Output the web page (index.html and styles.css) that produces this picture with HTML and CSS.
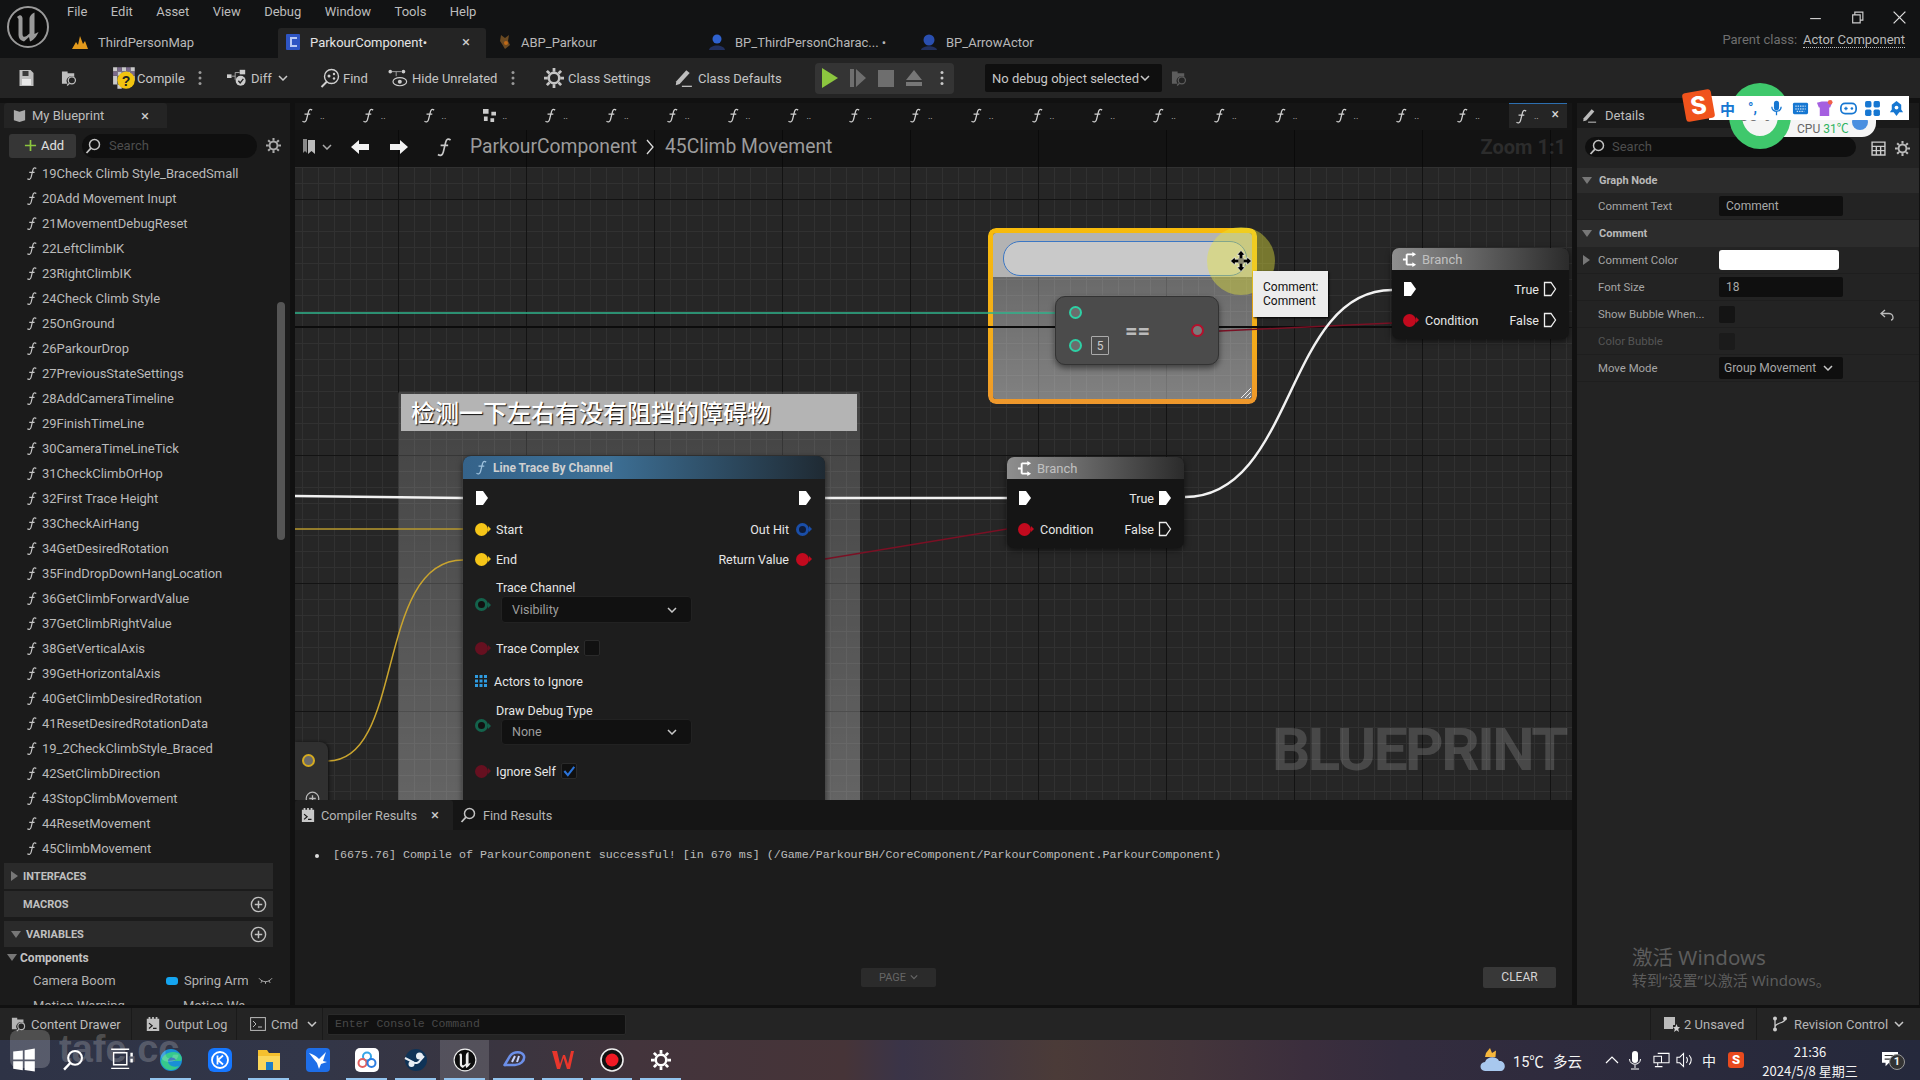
FILE: index.html
```html
<!DOCTYPE html>
<html lang="en">
<head>
<meta charset="utf-8">
<title>ParkourComponent</title>
<link rel="stylesheet" href="styles.css">
</head>
<body>
<svg class="defs" width="0" height="0">
  <defs>
    <symbol id="f" viewBox="0 0 14 16"><path d="M12 2.2C10 .8 8.6 1.6 8 4L6 12.2C5.4 14.8 3.6 15.6 1.6 14.2M3.8 6.6H10" fill="none" stroke="currentColor" stroke-width="1.4"/></symbol>
    <symbol id="exec" viewBox="0 0 14 16"><path d="M1 1H8L13 8L8 15H1Z" fill="#fff"/></symbol>
    <symbol id="exec-o" viewBox="0 0 14 16"><path d="M1.5 1.5H8L12.5 8L8 14.5H1.5Z" fill="none" stroke="#eee" stroke-width="1.3"/></symbol>
    <symbol id="branch" viewBox="0 0 16 16"><path d="M1 8H5M5 2.5H12M5 13.5H12M5 2.5V13.5" fill="none" stroke="#fff" stroke-width="2"/><path d="M11 0L15 2.5L11 5ZM11 11L15 13.5L11 16Z" fill="#fff"/></symbol>
    <symbol id="search" viewBox="0 0 16 16"><circle cx="9.5" cy="6.5" r="5" fill="none" stroke="currentColor" stroke-width="1.5"/><path d="M6 10.2L1.5 15" stroke="currentColor" stroke-width="1.8"/></symbol>
    <symbol id="gear" viewBox="0 0 16 16"><circle cx="8" cy="8" r="4.2" fill="none" stroke="currentColor" stroke-width="2"/><path d="M8 0V3M8 13V16M0 8H3M13 8H16M2.3 2.3L4.4 4.4M11.6 11.6L13.7 13.7M2.3 13.7L4.4 11.6M11.6 4.4L13.7 2.3" stroke="currentColor" stroke-width="2.2"/></symbol>
    <symbol id="kebab" viewBox="0 0 4 16"><circle cx="2" cy="2.5" r="1.5" fill="currentColor"/><circle cx="2" cy="8" r="1.5" fill="currentColor"/><circle cx="2" cy="13.5" r="1.5" fill="currentColor"/></symbol>
    <symbol id="chev" viewBox="0 0 10 6"><path d="M1 1L5 5L9 1" fill="none" stroke="currentColor" stroke-width="1.5"/></symbol>
    <symbol id="plus-c" viewBox="0 0 16 16"><circle cx="8" cy="8" r="6.7" fill="none" stroke="currentColor" stroke-width="1.3"/><path d="M8 4.5V11.5M4.5 8H11.5" stroke="currentColor" stroke-width="1.4"/></symbol>
    <symbol id="folder-s" viewBox="0 0 18 18"><path d="M1 2H7V4H14V8A5 5 0 0 0 7 15H1Z" fill="currentColor"/><circle cx="11.5" cy="11.5" r="3.8" fill="none" stroke="currentColor" stroke-width="1.3"/><path d="M9 14.5L6.5 17" stroke="currentColor" stroke-width="1.3"/></symbol>
    <symbol id="pen" viewBox="0 0 18 18"><path d="M3 12L12 2L15 4.5L6 14.5L2.5 15.5Z" fill="currentColor"/><path d="M8 16.5H17" stroke="currentColor" stroke-width="1.2"/></symbol>
    <symbol id="log" viewBox="0 0 16 18"><path d="M1 3H3V1H5V3H7V1H9V3H11V1H13V3H15V17H1Z" fill="currentColor"/><path d="M3.5 8L7 11L3.5 14M8 14H12" fill="none" stroke="#1c1c1c" stroke-width="1.4"/></symbol>
    <symbol id="ue" viewBox="0 0 44 44"><circle cx="22" cy="22" r="20" fill="#0c0c0c" stroke="currentColor" stroke-width="2"/><path d="M11 12C14 9 16 10 16.500 13V29C16.500 32 18.500 32.500 20.500 31L23.500 28.500V14C23.500 11 26 8.500 28.500 7.500V29L32.500 27C31 31 27 36 24 36.500L23 32L18 36.500C14.500 35.500 12.500 33.500 12.500 30V14Z" fill="currentColor"/></symbol>
  </defs>
</svg>

<div class="app">
  <header class="titlebar">
    <svg class="logo"><use href="#ue"/></svg>
    <div class="title-main">
      <div class="menu-row">
        <nav class="menu"><span>File</span><span>Edit</span><span>Asset</span><span>View</span><span>Debug</span><span>Window</span><span>Tools</span><span>Help</span></nav>
        <div class="winctl">
          <svg class="ctl" viewBox="0 0 14 14"><path d="M2 8H12" stroke="#ccc" stroke-width="1.1"/></svg>
          <svg class="ctl" viewBox="0 0 14 14"><path d="M2.500 4.500H9.500V12H2.500ZM4.500 4.500V2H12V9.500H9.500" fill="none" stroke="#ccc" stroke-width="1.100"/></svg>
          <svg class="ctl" viewBox="0 0 14 14"><path d="M1.500 1.500L12.500 12.500M12.500 1.500L1.500 12.500" stroke="#ddd" stroke-width="1.200"/></svg>
        </div>
      </div>
      <div class="tab-row">
        <div class="doc-tab t-map"><svg class="doc-ic" viewBox="0 0 18 18"><path d="M1 16L5 9L7 12L9 3L12 11L14 8L17 16Z" fill="#e39a1c"/></svg><span>ThirdPersonMap</span></div>
        <div class="doc-tab t-active"><svg class="doc-ic" viewBox="0 0 18 18"><rect x="2" y="1" width="14" height="16" rx="1" fill="#2e55c4"/><path d="M13 5H7V13H13" fill="none" stroke="#b8c9f4" stroke-width="2"/></svg><span class="t-text">ParkourComponent•</span><span class="t-x">×</span></div>
        <div class="doc-tab t-abp"><svg class="doc-ic" viewBox="0 0 18 18"><path d="M5 2L9 5L13 2L12 8L14 12L9 16L6 11L4 8Z" fill="#6b4a22"/><circle cx="10" cy="10" r="2" fill="#c06a18"/></svg><span>ABP_Parkour</span></div>
        <div class="doc-tab t-third"><svg class="doc-ic" viewBox="0 0 18 18"><circle cx="9" cy="6" r="4.500" fill="#2f62cf"/><path d="M1 17C2 11 16 11 17 17Z" fill="#22305f"/></svg><span>BP_ThirdPersonCharac... •</span></div>
        <div class="doc-tab t-arrow"><svg class="doc-ic" viewBox="0 0 18 18"><circle cx="9" cy="7" r="5.500" fill="#2a4fb0"/><path d="M1 17C2 12 16 12 17 17Z" fill="#22305f"/></svg><span>BP_ArrowActor</span></div>
        <div class="parent"><span class="parent-l">Parent class:</span><span class="parent-v">Actor Component</span></div>
      </div>
    </div>
  </header>

  <div class="toolbar">
    <svg class="tool-ic i-save" viewBox="0 0 16 18"><path d="M1 1H12L15 4V17H1Z" fill="#bdbdbd"/><rect x="4" y="2" width="6" height="5" fill="#3a3a3a"/><rect x="3.500" y="10" width="9" height="6" fill="#e8e8e8"/></svg>
    <svg class="tool-ic i-browse"><use href="#folder-s"/></svg>
    <svg class="i-compile" viewBox="0 0 22 24"><path d="M0 2H4V6H0ZM8 2H12V6H8ZM16 2H20V6H16ZM4 6H8V10H4ZM12 6H16V10H12ZM0 10H4V14H0ZM16 10H20V14H16ZM4 18H8V22H4ZM0 14H4V18H0Z" fill="#c9c9c9"/><path d="M4 2H8V6H4ZM12 2H16V6H12ZM0 6H4V10H0ZM8 6H12V10H8ZM16 6H20V10H16Z" fill="#7a6a8a"/><circle cx="12" cy="14" r="8" fill="#f2c40f"/><text x="12" y="19" class="q">?</text></svg>
    <span class="tool-t t-compile">Compile</span>
    <svg class="kebab k1"><use href="#kebab"/></svg>
    <svg class="i-diff" viewBox="0 0 22 20"><rect x="0" y="6" width="5" height="4" fill="#ccc"/><rect x="14" y="1" width="6" height="5" fill="#ccc"/><path d="M5 8H9M9 4V12M9 4H14" stroke="#aaa" fill="none"/><circle cx="15" cy="13" r="5.500" fill="#ccc"/><path d="M12.500 13L14.500 15.500L18 11" stroke="#222" stroke-width="1.500" fill="none"/></svg>
    <span class="tool-t t-diff">Diff</span>
    <svg class="chev c-diff"><use href="#chev"/></svg>
    <svg class="i-find" viewBox="0 0 20 20"><circle cx="11.500" cy="8.500" r="7" fill="none" stroke="#d0d0d0" stroke-width="1.400"/><path d="M7 13.500L1.500 19" stroke="#d0d0d0" stroke-width="2"/><circle cx="9" cy="8" r="1.500" fill="#d0d0d0"/><circle cx="14" cy="6" r="1.200" fill="#d0d0d0"/><circle cx="14" cy="10.500" r="1.200" fill="#d0d0d0"/></svg>
    <span class="tool-t t-find">Find</span>
    <svg class="i-hide" viewBox="0 0 22 20"><circle cx="2.500" cy="3" r="2" fill="#ccc"/><circle cx="17" cy="3" r="2" fill="#ccc"/><path d="M4 3H15M9 3V8" stroke="#aaa"/><ellipse cx="13" cy="14" rx="7.500" ry="4.500" fill="none" stroke="#ccc" stroke-width="1.300"/><circle cx="13" cy="14" r="2.200" fill="#ccc"/></svg>
    <span class="tool-t t-hide">Hide Unrelated</span>
    <svg class="kebab k2"><use href="#kebab"/></svg>
    <svg class="i-gear"><use href="#gear"/></svg>
    <span class="tool-t t-settings">Class Settings</span>
    <svg class="i-pen"><use href="#pen"/></svg>
    <span class="tool-t t-defaults">Class Defaults</span>
    <div class="playbar">
      <svg class="pb pb-play" viewBox="0 0 18 22"><path d="M1 1L17 11L1 21Z" fill="#8cc63f"/></svg>
      <svg class="pb pb-step" viewBox="0 0 18 22"><path d="M1 2H5V20H1Z M7 2L17 11L7 20Z" fill="#6e6e6e"/></svg>
      <svg class="pb pb-stop" viewBox="0 0 18 22"><rect x="1" y="3" width="16" height="17" fill="#6e6e6e"/></svg>
      <svg class="pb pb-eject" viewBox="0 0 18 22"><path d="M9 3L17 13H1ZM1 15H17V19H1Z" fill="#777"/></svg>
      <svg class="kebab k3"><use href="#kebab"/></svg>
    </div>
    <div class="debugsel"><span>No debug object selected</span><svg class="chev"><use href="#chev"/></svg></div>
    <svg class="tool-ic i-dbg"><use href="#folder-s"/></svg>
  </div>

  <main class="workspace">
    <aside class="left">
      <div class="dock-tab mybp"><svg class="book" viewBox="0 0 16 16"><path d="M2 2L8 4L14 2V13L8 15L2 13Z" fill="#aaa"/></svg><span>My Blueprint</span><span class="dock-x">×</span></div>
      <div class="left-search">
        <div class="add-btn"><svg class="plus" viewBox="0 0 14 14"><path d="M7 1V13M1 7H13" stroke="#8cc63f" stroke-width="1.800"/></svg><span>Add</span></div>
        <div class="search-pill sp-left"><svg class="s-ic"><use href="#search"/></svg><span>Search</span></div>
        <svg class="gear-s"><use href="#gear"/></svg>
      </div>
      <ul class="fn-list">
        <li><svg><use href="#f"/></svg>19Check Climb Style_BracedSmall</li>
        <li><svg><use href="#f"/></svg>20Add Movement Inupt</li>
        <li><svg><use href="#f"/></svg>21MovementDebugReset</li>
        <li><svg><use href="#f"/></svg>22LeftClimbIK</li>
        <li><svg><use href="#f"/></svg>23RightClimbIK</li>
        <li><svg><use href="#f"/></svg>24Check Climb Style</li>
        <li><svg><use href="#f"/></svg>25OnGround</li>
        <li><svg><use href="#f"/></svg>26ParkourDrop</li>
        <li><svg><use href="#f"/></svg>27PreviousStateSettings</li>
        <li><svg><use href="#f"/></svg>28AddCameraTimeline</li>
        <li><svg><use href="#f"/></svg>29FinishTimeLine</li>
        <li><svg><use href="#f"/></svg>30CameraTimeLineTick</li>
        <li><svg><use href="#f"/></svg>31CheckClimbOrHop</li>
        <li><svg><use href="#f"/></svg>32First Trace Height</li>
        <li><svg><use href="#f"/></svg>33CheckAirHang</li>
        <li><svg><use href="#f"/></svg>34GetDesiredRotation</li>
        <li><svg><use href="#f"/></svg>35FindDropDownHangLocation</li>
        <li><svg><use href="#f"/></svg>36GetClimbForwardValue</li>
        <li><svg><use href="#f"/></svg>37GetClimbRightValue</li>
        <li><svg><use href="#f"/></svg>38GetVerticalAxis</li>
        <li><svg><use href="#f"/></svg>39GetHorizontalAxis</li>
        <li><svg><use href="#f"/></svg>40GetClimbDesiredRotation</li>
        <li><svg><use href="#f"/></svg>41ResetDesiredRotationData</li>
        <li><svg><use href="#f"/></svg>19_2CheckClimbStyle_Braced</li>
        <li><svg><use href="#f"/></svg>42SetClimbDirection</li>
        <li><svg><use href="#f"/></svg>43StopClimbMovement</li>
        <li><svg><use href="#f"/></svg>44ResetMovement</li>
        <li><svg><use href="#f"/></svg>45ClimbMovement</li>
      </ul>
      <div class="sec"><i class="tri-r"></i><span>INTERFACES</span></div>
      <div class="sec sec-indent"><span>MACROS</span><svg class="sec-add"><use href="#plus-c"/></svg></div>
      <div class="sec sec-vars"><i class="tri-d"></i><span>VARIABLES</span><svg class="sec-add"><use href="#plus-c"/></svg></div>
      <div class="cat"><i class="tri-d"></i><span>Components</span></div>
      <div class="var"><span class="var-n">Camera Boom</span><i class="var-dot"></i><span class="var-t">Spring Arm</span><svg class="eye" viewBox="0 0 16 8"><path d="M1 1C5 6 11 6 15 1M3 6L4.500 3.800M8 7V4.800M13 6L11.500 3.800" stroke="#b5b5b5" fill="none"/></svg></div>
      <div class="var"><span class="var-n">Motion Warping</span><i class="var-dot2"></i><span class="var-t">Motion Wa</span></div>
      <div class="scrollthumb"></div>
    </aside>

    <section class="center">
      <div class="fn-tabs">
        <div class="fn-tab"><svg><use href="#f"/></svg><span>..</span></div>
        <div class="fn-tab"><svg><use href="#f"/></svg><span>..</span></div>
        <div class="fn-tab"><svg><use href="#f"/></svg><span>..</span></div>
        <div class="fn-tab"><svg viewBox="0 0 14 14"><path d="M0 0H6V5H0ZM9 3H14V7H9ZM1 8H5V13H1ZM8 10H12V14H8Z" fill="#ccc"/></svg><span>..</span></div>
        <div class="fn-tab"><svg><use href="#f"/></svg><span>..</span></div>
        <div class="fn-tab"><svg><use href="#f"/></svg><span>..</span></div>
        <div class="fn-tab"><svg><use href="#f"/></svg><span>..</span></div>
        <div class="fn-tab"><svg><use href="#f"/></svg><span>..</span></div>
        <div class="fn-tab"><svg><use href="#f"/></svg><span>..</span></div>
        <div class="fn-tab"><svg><use href="#f"/></svg><span>..</span></div>
        <div class="fn-tab"><svg><use href="#f"/></svg><span>..</span></div>
        <div class="fn-tab"><svg><use href="#f"/></svg><span>..</span></div>
        <div class="fn-tab"><svg><use href="#f"/></svg><span>..</span></div>
        <div class="fn-tab"><svg><use href="#f"/></svg><span>..</span></div>
        <div class="fn-tab"><svg><use href="#f"/></svg><span>..</span></div>
        <div class="fn-tab"><svg><use href="#f"/></svg><span>..</span></div>
        <div class="fn-tab"><svg><use href="#f"/></svg><span>..</span></div>
        <div class="fn-tab"><svg><use href="#f"/></svg><span>..</span></div>
        <div class="fn-tab"><svg><use href="#f"/></svg><span>..</span></div>
        <div class="fn-tab"><svg><use href="#f"/></svg><span>..</span></div>
        <div class="fn-tab fn-active"><svg><use href="#f"/></svg><span>..</span><b>×</b></div>
      </div>
      <div class="crumb">
        <svg class="bm" viewBox="0 0 14 18"><path d="M1 1H5V15L3 13L1 15Z" fill="#888"/><path d="M6 2H13V16L9.500 13L6 16Z" fill="#bbb"/></svg>
        <svg class="chev c-bm"><use href="#chev"/></svg>
        <svg class="nav n-back" viewBox="0 0 20 16"><path d="M9 1L1 8L9 15V11H19V5H9Z" fill="#f2f2f2"/></svg>
        <svg class="nav n-fwd" viewBox="0 0 20 16"><path d="M11 1L19 8L11 15V11H1V5H11Z" fill="#f2f2f2"/></svg>
        <svg class="crumb-f"><use href="#f"/></svg>
        <span class="crumb-a">ParkourComponent</span>
        <svg class="crumb-sep" viewBox="0 0 8 16"><path d="M1 1L7 8L1 15" fill="none" stroke="#ddd" stroke-width="1.300"/></svg>
        <span class="crumb-b">45Climb Movement</span>
        <span class="zoom">Zoom 1:1</span>
      </div>

      <div class="canvas">
        <div class="comment-big">
          <div class="comment-big-h">检测一下左右有没有阻挡的障碍物</div>
        </div>
        <div class="comment-sel">
          <div class="comment-sel-h"><div class="comment-input"></div></div>
          <svg class="grip" viewBox="0 0 12 12"><path d="M1 11L11 1M5 11L11 5M9 11L11 9" stroke="#eee"/></svg>
        </div>

        <svg class="wires" viewBox="0 0 1277 633">
          <path d="M0 160H1097" stroke="#0c0c0c" stroke-width="2" fill="none"/>
          <path d="M0 146H760" stroke="#2fb58c" stroke-width="1.500" fill="none"/>
          <path d="M904 165L1097 156" stroke="#7a1024" stroke-width="1.500" fill="none"/>
          <path d="M530 392L712 362" stroke="#7a1024" stroke-width="1.500" fill="none"/>
          <path d="M0 362H168" stroke="#b89a2e" stroke-width="1.500" fill="none"/>
          <path d="M33 594C110 594 80 393 168 393" stroke="#c9a42e" stroke-width="1.500" fill="none"/>
          <path d="M0 329L168 331" stroke="#f2f2f2" stroke-width="2.500" fill="none"/>
          <path d="M530 331H712" stroke="#f2f2f2" stroke-width="2.500" fill="none"/>
          <path d="M890 330C1000 330 990 123 1097 123" stroke="#f2f2f2" stroke-width="2.500" fill="none"/>
        </svg>

        <div class="eq-node">
          <div class="eq-pins">
            <i class="pin ring-g"></i>
            <div class="eq-row"><i class="pin ring-g"></i><span class="eq-5">5</span></div>
          </div>
          <span class="eq-sign">==</span>
          <i class="pin ring-r"></i>
        </div>

        <div class="node branch b-low">
          <div class="node-h"><svg><use href="#branch"/></svg><span>Branch</span></div>
          <div class="b-row"><svg class="execp"><use href="#exec"/></svg><em></em><span>True</span><svg class="execp"><use href="#exec"/></svg></div>
          <div class="b-row"><i class="pin red"></i><span class="b-cond">Condition</span><em></em><span>False</span><svg class="execp"><use href="#exec-o"/></svg></div>
        </div>
        <div class="node branch b-high">
          <div class="node-h"><svg><use href="#branch"/></svg><span>Branch</span></div>
          <div class="b-row"><svg class="execp"><use href="#exec"/></svg><em></em><span>True</span><svg class="execp"><use href="#exec-o"/></svg></div>
          <div class="b-row"><i class="pin red"></i><span class="b-cond">Condition</span><em></em><span>False</span><svg class="execp"><use href="#exec-o"/></svg></div>
        </div>

        <div class="node trace">
          <div class="trace-h"><svg><use href="#f"/></svg><span>Line Trace By Channel</span></div>
          <div class="t-row r-exec"><svg class="execp"><use href="#exec"/></svg><em></em><svg class="execp exec-r"><use href="#exec"/></svg></div>
          <div class="t-row r-start"><i class="pin yellow"></i><span>Start</span><em></em><span class="t-out">Out Hit</span><i class="pin blue"></i></div>
          <div class="t-row"><i class="pin yellow"></i><span>End</span><em></em><span class="t-out">Return Value</span><i class="pin red"></i></div>
          <div class="t-param">
            <i class="pin teal"></i>
            <div class="t-param-b"><span>Trace Channel</span><div class="combo"><span>Visibility</span><svg class="chev"><use href="#chev"/></svg></div></div>
          </div>
          <div class="t-row r-complex"><i class="pin dred"></i><span>Trace Complex</span><i class="check"></i></div>
          <div class="t-row r-actors"><svg class="arr" viewBox="0 0 12 12"><path d="M0 0H3V3H0ZM4.500 0H7.500V3H4.500ZM9 0H12V3H9ZM0 4.500H3V7.500H0ZM4.500 4.500H7.500V7.500H4.500ZM9 4.500H12V7.500H9ZM0 9H3V12H0ZM4.500 9H7.500V12H4.500ZM9 9H12V12H9Z" fill="#2f9be0"/></svg><span>Actors to Ignore</span></div>
          <div class="t-param p-debug">
            <i class="pin teal"></i>
            <div class="t-param-b"><span>Draw Debug Type</span><div class="combo"><span>None</span><svg class="chev"><use href="#chev"/></svg></div></div>
          </div>
          <div class="t-row r-self"><i class="pin dred"></i><span>Ignore Self</span><i class="check on"><svg viewBox="0 0 12 12"><path d="M2 6L5 9.500L10.500 2.500" fill="none" stroke="#2b73d8" stroke-width="1.800"/></svg></i></div>
          <svg class="chev more"><use href="#chev"/></svg>
        </div>

        <div class="mini-node"><i class="pin ring-y"></i></div>
        <svg class="mini-plus"><use href="#plus-c"/></svg>

        <div class="bp-mark">BLUEPRINT</div>
        <div class="cursor-glow"></div>
        <svg class="cursor" viewBox="0 0 24 24"><path d="M12 .5L16.500 5.500H14V10H18.500V7.500L23.500 12L18.500 16.500V14H14V18.500H16.500L12 23.500L7.500 18.500H10V14H5.500V16.500L.5 12L5.500 7.500V10H10V5.500H7.500Z" fill="#000" stroke="#fff" stroke-width=".7"/><path d="M9 9H15V15H9Z" fill="#8a8a70"/></svg>
        <div class="tooltip">Comment:<br>Comment</div>
      </div>

      <div class="bottom">
        <div class="bottom-tabs">
          <div class="btab b-active"><svg class="b-ic"><use href="#log"/></svg><span>Compiler Results</span><span class="b-x">×</span></div>
          <div class="btab"><svg class="b-s"><use href="#search"/></svg><span>Find Results</span></div>
        </div>
        <ul class="logs"><li>[6675.76] Compile of ParkourComponent successful! [in 670 ms] (/Game/ParkourBH/CoreComponent/ParkourComponent.ParkourComponent)</li></ul>
        <div class="bottom-foot"><div class="page-btn"><span>PAGE</span><svg class="chev"><use href="#chev"/></svg></div><div class="clear-btn">CLEAR</div></div>
      </div>
    </section>

    <aside class="details">
      <div class="dock-tab det"><svg class="det-pen"><use href="#pen"/></svg><span>Details</span></div>
      <div class="det-search"><div class="search-pill sp-det"><svg class="s-ic"><use href="#search"/></svg><span>Search</span></div>
        <svg class="tbl" viewBox="0 0 14 14"><path d="M1 1H13V13H1ZM1 5H13M1 9H13M5 5V13M9 5V13" fill="none" stroke="#ccc" stroke-width="1.300"/></svg>
        <svg class="gear-d"><use href="#gear"/></svg></div>
      <div class="d-head"><i class="tri-d"></i><span>Graph Node</span></div>
      <div class="d-row"><span class="d-label">Comment Text</span><div class="d-val">Comment</div></div>
      <div class="d-head d-head2"><i class="tri-d"></i><span>Comment</span></div>
      <div class="d-row"><i class="tri-r d-tri"></i><span class="d-label">Comment Color</span><div class="d-color"></div></div>
      <div class="d-row"><span class="d-label">Font Size</span><div class="d-val">18</div></div>
      <div class="d-row"><span class="d-label">Show Bubble When...</span><i class="d-check"></i><svg class="undo" viewBox="0 0 14 12"><path d="M5 1L1 4.500L5 8M1 4.500H9C12 4.500 13 7 13 8.500C13 10 12 11 11 11" fill="none" stroke="#bbb" stroke-width="1.300"/></svg></div>
      <div class="d-row dim"><span class="d-label">Color Bubble</span><i class="d-check faint"></i></div>
      <div class="d-row"><span class="d-label">Move Mode</span><div class="d-val d-combo"><span>Group Movement</span><svg class="chev"><use href="#chev"/></svg></div></div>
    </aside>
  </main>

  <footer class="status">
    <div class="st-item st-cd"><svg><use href="#folder-s"/></svg><span>Content Drawer</span></div>
    <div class="st-item st-ol"><svg class="st-log"><use href="#log"/></svg><span>Output Log</span></div>
    <div class="st-item st-cmd"><svg viewBox="0 0 16 14"><rect x=".6" y=".6" width="14.800" height="12.800" fill="none" stroke="#bbb"/><path d="M3 4L6 7L3 10M8 10H12" fill="none" stroke="#bbb"/></svg><span>Cmd</span><svg class="chev"><use href="#chev"/></svg></div>
    <div class="console">Enter Console Command</div>
    <div class="st-item st-un"><svg viewBox="0 0 16 16"><path d="M0 1H11V9H9V13H0Z" fill="#bbb"/><path d="M12.500 8L13.700 11H16L14.200 13L15 16L12.500 14.300L10 16L10.800 13L9 11H11.300Z" fill="#ccc"/></svg><span>2 Unsaved</span></div>
    <div class="st-item st-rc"><svg viewBox="0 0 16 16"><circle cx="3" cy="2.500" r="2" fill="#ccc"/><circle cx="13" cy="2.500" r="2" fill="#ccc"/><circle cx="3" cy="13.500" r="2" fill="#ccc"/><path d="M3 3V13M13 3C13 8 3 6 3 11" fill="none" stroke="#ccc" stroke-width="1.300"/></svg><span>Revision Control</span><svg class="chev"><use href="#chev"/></svg></div>
  </footer>

  <div class="taskbar">
    <div class="task"><svg viewBox="0 0 20 20"><path d="M1 3L9 2V9.500H1ZM10.500 1.800L19 .5V9.500H10.500ZM1 11H9V18.500L1 17.300ZM10.500 11H19V19.500L10.500 18.300Z" fill="#fff"/></svg></div>
    <div class="task"><svg class="t-search"><use href="#search"/></svg></div>
    <div class="task"><svg viewBox="0 0 20 20"><path d="M3 4H14V14H3ZM1 1H16M1 17H16" fill="none" stroke="#fff" stroke-width="1.200"/><path d="M18 4V14" stroke="#fff" stroke-width="2" stroke-dasharray="3 2"/></svg></div>
    <div class="task open"><svg viewBox="0 0 24 24"><circle cx="12" cy="12" r="11" fill="#1a8fd6"/><path d="M2 14C3 6 12 2 19 5C23 7 23.500 11 22 13H9C9 17 14 20 20 18C16 24 5 24 2 14Z" fill="#36c98c"/><path d="M9 13C9 9 15 8 17 12Z" fill="#1c5fb0"/></svg></div>
    <div class="task"><svg viewBox="0 0 24 24"><rect x="0" y="0" width="24" height="24" rx="6" fill="#1677ff"/><circle cx="12" cy="12" r="8" fill="none" stroke="#fff" stroke-width="1.800"/><path d="M9.500 7.500V16.500M15 7.500L10 12L15 16.500" fill="none" stroke="#fff" stroke-width="1.800"/></svg></div>
    <div class="task open"><svg viewBox="0 0 24 24"><path d="M1 2H10L12 5H23V22H1Z" fill="#f5c02e"/><rect x="1" y="8" width="22" height="14" fill="#fbd75b"/><rect x="9" y="14" width="7" height="8" fill="#1d7ec9"/></svg></div>
    <div class="task"><svg viewBox="0 0 24 24"><rect width="24" height="24" rx="4" fill="#1e6ee8"/><path d="M3 5C9 7 11 9 13 11L20 4L17 13L21 14L15 16L13 21L11 15Z" fill="#fff"/></svg></div>
    <div class="task open"><svg viewBox="0 0 24 24"><rect width="24" height="24" rx="5" fill="#fff"/><circle cx="12" cy="8.500" r="4" fill="none" stroke="#35a5e8" stroke-width="2"/><circle cx="7.500" cy="15" r="4" fill="none" stroke="#e25f5f" stroke-width="2"/><circle cx="16.500" cy="15" r="4" fill="none" stroke="#2c7ce0" stroke-width="2"/></svg></div>
    <div class="task open"><svg viewBox="0 0 24 24"><circle cx="12" cy="12" r="11" fill="#0f3357"/><path d="M1 10L9 14A4.500 4.500 0 0 0 16 12.500L20 8" fill="none" stroke="#e8eef4" stroke-width="2"/><circle cx="15.500" cy="8" r="3.500" fill="#e8eef4"/><circle cx="7.500" cy="16" r="3" fill="#e8eef4"/></svg></div>
    <div class="task open active"><svg class="t-ue"><use href="#ue"/></svg></div>
    <div class="task open"><svg viewBox="0 0 24 24"><path d="M2 18L8 8C12 3 20 3 22 8C23 13 18 17 13 17H2" fill="none" stroke="#6c8fe8" stroke-width="2.500"/><path d="M13 8L10 14M17 8L15 14" stroke="#c6d3ff" stroke-width="2"/></svg></div>
    <div class="task open"><svg viewBox="0 0 24 24"><path d="M1 3H6L9 16L12 7H14L17 16L20 3H23L19 21H16L12.500 10L9 21H6Z" fill="#e8362c"/></svg></div>
    <div class="task open"><svg viewBox="0 0 24 24"><circle cx="12" cy="12" r="11" fill="#111" stroke="#eee" stroke-width="1.600"/><circle cx="12" cy="12" r="6.500" fill="#f01a24"/></svg></div>
    <div class="task open"><svg class="t-gear"><use href="#gear"/></svg></div>
    <div class="tray">
      <svg class="weather" viewBox="0 0 26 24"><path d="M10 0L12 5L16 2.500L15.500 9H5L6 5Z" fill="#f6b73c"/><path d="M5 23C-1 23 -1 14 5 14C7 8 17 8 19 13C26 12 27 23 20 23Z" fill="#a8c8ee"/></svg>
      <span class="temp">15℃</span>
      <span class="sky">多云</span>
      <svg class="caret" viewBox="0 0 14 8"><path d="M1 7L7 1L13 7" fill="none" stroke="#fff" stroke-width="1.200"/></svg>
      <svg class="tr mic" viewBox="0 0 14 20"><rect x="4" y="1" width="6" height="12" rx="3" fill="#fff"/><path d="M1.500 9C1.500 16 12.500 16 12.500 9M7 15V18M3 19H11" fill="none" stroke="#fff"/></svg>
      <svg class="tr net" viewBox="0 0 18 16"><path d="M5 1H17V11H5M1 4H9V11H1ZM5 11V14M2 15H10" fill="none" stroke="#fff" stroke-width="1.100"/></svg>
      <svg class="tr vol" viewBox="0 0 18 16"><path d="M1 5H4L8 1V15L4 11H1ZM11 5C12.500 7 12.500 9 11 11M14 3C16.500 6 16.500 10 14 13" fill="none" stroke="#fff" stroke-width="1.100"/></svg>
      <span class="ime-zh">中</span>
      <span class="s-tray">S</span>
      <div class="clock"><span>21:36</span><span>2024/5/8 星期三</span></div>
      <div class="notif"><svg viewBox="0 0 18 18"><path d="M0 0H18V12H8L4 16V12H0Z" fill="#fff"/><path d="M3 4H15M3 8H15" stroke="#333" stroke-width="1.200"/></svg><span>1</span></div>
    </div>
  </div>

  <div class="ime">
    <div class="ime-under"><span class="ime-cpu">CPU <b>31℃</b></span><i class="ime-ball"></i></div>
    <div class="ime-green"><span class="ime-pct">00%</span></div>
    <div class="ime-bar">
      <span class="ime-s">S</span>
      <span class="ime-cn">中</span>
      <span class="ime-p">°,</span>
      <svg viewBox="0 0 14 20"><rect x="4" y="1" width="6" height="11" rx="3" fill="#1677d2"/><path d="M1.500 8C1.500 15 12.500 15 12.500 8M7 14V18" fill="none" stroke="#1677d2" stroke-width="1.500"/></svg>
      <svg viewBox="0 0 18 16"><rect x="1" y="2" width="16" height="12" rx="1.500" fill="#1677d2"/><path d="M3.500 5.500H14.500M3.500 8.500H14.500M5 11H13" stroke="#fff" stroke-dasharray="1.500 1"/></svg>
      <svg viewBox="0 0 18 18"><path d="M1 3L6 1.500L12 1.500L17 3L15 8L14 8V17H4V8H3Z" fill="#a55fe0"/><circle cx="15" cy="2.500" r="2.500" fill="#f0604a"/></svg>
      <svg viewBox="0 0 20 16"><rect x="1" y="2" width="18" height="12" rx="5" fill="none" stroke="#1677d2" stroke-width="2"/><path d="M5 8H9M7 6V10" stroke="#1677d2" stroke-width="1.500"/><circle cx="14" cy="8" r="1.500" fill="#1677d2"/></svg>
      <svg viewBox="0 0 16 16"><rect x="1" y="1" width="6" height="6" rx="1.500" fill="#1677d2"/><rect x="9" y="1" width="6" height="6" rx="1.500" fill="#1677d2"/><rect x="1" y="9" width="6" height="6" rx="1.500" fill="#1677d2"/><rect x="9" y="9" width="6" height="6" rx="1.500" fill="#1677d2"/></svg>
      <svg viewBox="0 0 16 18"><path d="M8 1L13 5V10L15 13H11L8 17L5 13H1L3 10V5Z" fill="#1677d2"/><circle cx="8" cy="8" r="2" fill="#fff"/></svg>
    </div>
  </div>

  <div class="winmark"><span class="w1">激活 Windows</span><span class="w2">转到“设置”以激活 Windows。</span></div>
  <div class="tafe"><i class="tafe-logo"></i><span>tafe.cc</span></div>
</div>
</body>
</html>
```

FILE: styles.css
```css
* { box-sizing: border-box; }
html, body { margin: 0; padding: 0; height: 100%; }
body { background: #111; overflow: hidden; font-family: Roboto, "Noto Sans CJK SC", sans-serif; font-size: 13px; color: #bdbdbd; }
.defs { position: absolute; }
i, em, b { font-style: normal; font-weight: normal; display: block; }
ul { list-style: none; margin: 0; padding: 0; }
.app { position: relative; width: 1920px; height: 1080px; display: flex; flex-direction: column; overflow: hidden; }

/* title bar */
.titlebar { height: 58px; background: #121314; display: flex; color: #bdbdbd; flex: none; }
.logo { width: 44px; height: 44px; margin: 5px 0 0 6px; color: #9a9a9a; flex: none; }
.title-main { flex: 1; display: flex; flex-direction: column; }
.menu-row { height: 28px; display: flex; justify-content: space-between; padding-left: 17px; }
.menu { display: flex; gap: 23.400px; align-items: center; height: 22px; }
.winctl { display: flex; gap: 27px; padding: 10px 13px 0 0; }
.ctl { width: 15px; height: 15px; }
.tab-row { height: 30px; display: flex; align-items: center; position: relative; }
.doc-tab { display: flex; align-items: center; height: 30px; padding-bottom: 2px; color: #b8b8b8; }
.doc-ic { width: 18px; height: 18px; flex: none; margin-right: 9px; }
.t-map { margin-left: 21px; width: 207px; }
.t-active { width: 208px; background: #242424; padding-left: 6px; border-radius: 3px 3px 0 0; color: #e4e4e4; }
.t-active .doc-ic { margin-right: 8px; }
.t-text { width: 148px; }
.t-x { color: #ccc; font-size: 15px; margin-left: 4px; }
.t-abp { margin-left: 10px; width: 212px; }
.t-abp .doc-ic { margin-right: 7px; }
.t-third { width: 212px; }
.t-arrow { width: 200px; }
.t-arrow .doc-ic { margin-right: 8px; }
.parent { position: absolute; right: 15px; top: 4px; display: flex; gap: 6px; }
.parent-l { color: #6f6f6f; }
.parent-v { color: #b9b9b9; border-bottom: 1px dotted #bbb; }

/* toolbar */
.toolbar { height: 40px; background: #242424; display: flex; align-items: center; color: #c4c4c4; flex: none; }
.toolbar svg { flex: none; }
.tool-ic { width: 17px; height: 18px; color: #bfbfbf; }
.i-save { margin-left: 18px; }
.i-browse { margin-left: 26px; }
.i-compile { width: 24px; height: 26px; margin-left: 35px; }
.q { font: bold 13px "Liberation Sans", sans-serif; fill: #222; text-anchor: middle; }
.tool-t { white-space: nowrap; font-size: 13px; }
.t-compile { margin-left: 0; width: 46px; }
.kebab { width: 4px; height: 16px; color: #999; }
.k1 { margin-left: 15px; }
.i-diff { width: 20px; height: 20px; margin-left: 25px; }
.t-diff { margin-left: 4px; width: 20px; }
.chev { width: 10px; height: 6px; color: #c8c8c8; }
.c-diff { margin-left: 7px; }
.i-find { width: 20px; height: 20px; margin-left: 32px; }
.t-find { margin-left: 3px; width: 26px; }
.i-hide { width: 20px; height: 20px; margin-left: 19px; }
.t-hide { margin-left: 4px; width: 88px; }
.k2 { margin-left: 11px; }
.i-gear { width: 20px; height: 20px; margin-left: 29px; color: #c4c4c4; }
.t-settings { margin-left: 4px; width: 84px; }
.i-pen { width: 20px; height: 20px; margin-left: 21px; color: #bdbdbd; }
.t-defaults { margin-left: 5px; width: 84px; }
.playbar { margin-left: 33px; width: 139px; height: 31px; background: #343434; border-radius: 4px; display: flex; align-items: center; }
.pb { width: 18px; height: 22px; margin-left: 10px; }
.pb-play { margin-left: 6px; }
.k3 { margin-left: 17px; color: #c8c8c8; }
.debugsel { margin-left: 31px; width: 177px; height: 28px; background: #0f0f0f; display: flex; align-items: center; justify-content: space-between; padding: 0 12px 0 7px; border-radius: 2px; color: #c8c8c8; white-space: nowrap; }
.i-dbg { margin-left: 9px; color: #5d5d5d; }

/* workspace */
.workspace { flex: none; margin-top: 5px; height: 902px; display: grid; grid-template-columns: 290px 1277px 342px; column-gap: 5px; position: relative; }
.left { background: #1b1b1b; position: relative; overflow: hidden; height: 902px; }
.dock-tab { height: 25px; background: #242424; display: flex; align-items: center; color: #bdbdbd; }
.mybp { width: 163px; margin-left: 4px; padding-left: 8px; border-radius: 3px 3px 0 0; }
.book { width: 15px; height: 15px; margin-right: 5px; }
.dock-x { margin-left: auto; margin-right: 18px; font-size: 15px; color: #ccc; }
.left-search { height: 30px; padding: 5px 6px 0 9px; display: flex; align-items: center; background: #1b1b1b; }
.add-btn { width: 67px; height: 24px; background: #363636; border-radius: 3px; display: flex; align-items: center; padding-left: 15px; color: #e0e0e0; gap: 4px; }
.plus { width: 13px; height: 13px; }
.search-pill { height: 20px; background: #0f0f0f; border-radius: 10px; display: flex; align-items: center; color: #4d4d4d; }
.sp-left { width: 175px; margin-left: 6px; padding-left: 3px; height: 24px; border-radius: 12px; }
.s-ic { width: 16px; height: 16px; color: #c2c2c2; margin-right: 8px; flex: none; }
.gear-s { width: 15px; height: 15px; color: #aaa; margin-left: 9px; }
.fn-list { padding-top: 3px; }
.fn-list li { height: 25px; display: flex; align-items: center; padding-left: 26px; color: #bababa; white-space: nowrap; letter-spacing: -.03px; }
.fn-list svg { width: 12px; height: 15px; margin-right: 4px; color: #c6c6c6; flex: none; }
.sec { margin: 2px 17px 0 4px; height: 26px; background: #2a2a2a; display: flex; align-items: center; font-size: 11px; font-weight: 700; color: #c0c0c0; padding-left: 7px; position: relative; }
.sec span { margin-left: 5px; }
.sec-indent span { margin-left: 12px; }
.sec-vars { margin-top: 4px; }
.sec-add { position: absolute; right: 6px; top: 5px; width: 17px; height: 17px; color: #c0c0c0; }
.tri-r { width: 0; height: 0; border-left: 7px solid #777; border-top: 5px solid transparent; border-bottom: 5px solid transparent; }
.tri-d { width: 0; height: 0; border-top: 7px solid #777; border-left: 5px solid transparent; border-right: 5px solid transparent; }
.cat { height: 21px; display: flex; align-items: center; padding-left: 7px; gap: 3px; font-size: 12px; font-weight: 700; color: #c2c2c2; }
.var { height: 25px; display: flex; align-items: center; padding-left: 33px; position: relative; color: #b2b2b2; white-space: nowrap; }
.var-n { width: 133px; }
.var-dot { width: 12px; height: 8px; background: #15a5f0; border-radius: 3px; margin-right: 6px; }
.var-dot2 { width: 8px; height: 2px; background: #777; margin-right: 7px; margin-left: 2px; }
.var-t { width: 64px; overflow: hidden; }
.eye { width: 15px; height: 8px; margin-left: 10px; }
.scrollthumb { position: absolute; left: 277px; top: 199px; width: 8px; height: 238px; background: #555; border-radius: 4px; }

/* center */
.center { display: flex; flex-direction: column; height: 902px; background: #1c1c1c; }
.fn-tabs { height: 27px; display: flex; background: #151515; flex: none; }
.fn-tab { width: 60.800px; height: 25px; display: flex; align-items: center; padding-left: 6px; color: #cfcfcf; font-size: 9px; gap: 6px; position: relative; }
.fn-tab svg { width: 13px; height: 15px; flex: none; }
.fn-active { background: #252525; width: 58px; border-top: 1px solid #2d6fb0; margin-left: -2px; }
.fn-active b { font-size: 14px; color: #d8d8d8; position: absolute; right: 8px; top: 2px; }
.crumb { height: 37px; background-color: #131313; background-image: linear-gradient(90deg, #0a0a0a 1px, transparent 1px); background-size: 128px 100%; background-position: 103px 0; display: flex; align-items: center; flex: none; position: relative; color: #9c9c9c; font-size: 19.300px; padding-bottom: 4px; }
.bm { width: 14px; height: 18px; margin-left: 7px; }
.c-bm { margin-left: 6px; color: #aaa; }
.nav { width: 20px; height: 16px; }
.n-back { margin-left: 18px; }
.n-fwd { margin-left: 19px; }
.crumb-f { width: 17px; height: 20px; margin-left: 27px; color: #c8c8c8; }
.crumb-a { margin-left: 17px; width: 165px; white-space: nowrap; }
.crumb-sep { width: 8px; height: 16px; margin-left: 11px; }
.crumb-b { margin-left: 11px; white-space: nowrap; }
.zoom { position: absolute; right: 6px; top: 5px; font-weight: 700; color: #2c2c2c; font-size: 20px; }

.canvas {
  position: relative; height: 633px; flex: none; overflow: hidden;
  background-color: #262626;
  background-image:
    linear-gradient(90deg, #131313 1px, transparent 1px),
    linear-gradient(#131313 1px, transparent 1px),
    linear-gradient(90deg, #313131 1px, transparent 1px),
    linear-gradient(#313131 1px, transparent 1px);
  background-size: 128px 128px, 128px 128px, 16px 16px, 16px 16px;
  background-position: 103px 0, 0 32px, 7px 0, 0 0;
}
.wires { position: absolute; left: 0; top: 0; width: 1277px; height: 633px; }
.comment-big { position: absolute; left: 103px; top: 225px; width: 462px; height: 420px; padding: 2px 3px; background: linear-gradient(rgba(255,255,255,.13), rgba(255,255,255,.29)); border-radius: 2px 2px 0 0; }
.comment-big-h { height: 37px; background: #b4b4b4; color: #fff; font-size: 24px; font-weight: 500; line-height: 36px; padding-left: 10px; text-shadow: 1px 1px 1px #111; white-space: nowrap; font-family: "Noto Sans CJK SC", sans-serif; }
.comment-sel { position: absolute; left: 693px; top: 61px; width: 269px; height: 176px; border: 5px solid transparent; border-radius: 8px; background: linear-gradient(rgba(255,255,255,.28), rgba(255,255,255,.42)); background-clip: padding-box; }
.comment-sel::before { content: ""; position: absolute; inset: -5px; padding: 5px; border-radius: 8px; background: linear-gradient(#f7bb0c, #f3a91c 70%, #ee972c); -webkit-mask: linear-gradient(#000 0 0) content-box, linear-gradient(#000 0 0); mask: linear-gradient(#000 0 0) content-box, linear-gradient(#000 0 0); -webkit-mask-composite: xor; mask-composite: exclude; }
.comment-sel-h { height: 44px; background: #b3b3b3; padding: 8px 0 0 10px; border-radius: 3px 3px 0 0; }
.comment-input { width: 244px; height: 35px; border: 1px solid #3b77c4; border-radius: 17px; background: #c9c9c9; }
.grip { position: absolute; right: 0; bottom: 0; width: 12px; height: 12px; }

.pin { width: 13px; height: 13px; border-radius: 50%; position: relative; flex: none; }
.pin::after { content: ""; position: absolute; left: 13px; top: 3.500px; border-left: 3px solid transparent; border-top: 3px solid transparent; border-bottom: 3px solid transparent; }
.yellow { background: #f5c518; }
.yellow::after { border-left-color: #f5c518; }
.blue { background: #0e1b38; border: 3px solid #1a4ea8; }
.blue::after { border-left-color: #1a4ea8; left: 10px; top: .5px; }
.red { background: #c20a1e; }
.red::after { border-left-color: #c20a1e; }
.teal { background: #111; border: 3px solid #14634c; }
.teal::after { border-left-color: #14634c; left: 10px; top: .5px; }
.dred { background: #661020; }
.dred::after { border-left-color: #661020; }
.ring-g { background: #6c6c6c; border: 2px solid #2ed0a5; }
.ring-r { background: #7a7a7a; border: 2px solid #b5102c; }
.ring-y { background: #6a6a6a; border: 2px solid #d4aa20; }
.ring-g::after, .ring-r::after, .ring-y::after { display: none; }

.eq-node { position: absolute; left: 760px; top: 129px; width: 164px; height: 69px; background: #4b4b4b; border: 1px solid #333; border-radius: 10px; box-shadow: 0 3px 6px rgba(0,0,0,.5); display: flex; align-items: center; padding: 0 14px 0 13px; }
.eq-pins { display: flex; flex-direction: column; gap: 20px; padding-bottom: 4px; width: 56px; }
.eq-row { display: flex; gap: 9px; align-items: center; height: 13px; }
.eq-5 { width: 18px; height: 19px; border: 1px solid #aaa; border-radius: 1px; font-size: 12px; line-height: 18px; text-align: center; color: #ccc; flex: none; }
.eq-sign { font-size: 22px; font-weight: 700; color: #bbb; width: 66px; }

.node { position: absolute; background: #151515; border-radius: 7px; color: #e6e6e6; box-shadow: 0 2px 6px rgba(0,0,0,.6); white-space: nowrap; font-size: 12.500px; }
.branch { width: 177px; height: 91px; }
.b-low { left: 712px; top: 290px; }
.b-high { left: 1097px; top: 81px; }
.node-h { height: 22px; border-radius: 7px 7px 0 0; background: linear-gradient(90deg, #8e8e8e, #6a6a6a 40%, #2b2b2b); display: flex; align-items: center; padding-left: 10px; gap: 5px; color: #c0c0c0; margin-bottom: 4px; font-size: 13px; }
.node-h svg { width: 15px; height: 15px; }
.b-row { height: 30px; display: flex; align-items: center; padding: 0 12px 0 11px; gap: 4px; }
.b-row em { flex: 1; }
.b-row + .b-row { margin-top: 1px; }
.b-cond { margin-left: 5px; }
.execp { width: 14px; height: 16px; flex: none; }
.trace { left: 168px; top: 289px; width: 362px; height: 380px; background: #1d1d1d; border-radius: 8px 8px 0 0; overflow: hidden; }
.trace-h { height: 23px; background: linear-gradient(90deg, #35638a, #3d7096 40%, #1f2a33 100%); display: flex; align-items: center; padding-left: 12px; gap: 5px; color: #d0d0d0; font-weight: 700; font-size: 12px; }
.trace-h svg { width: 13px; height: 15px; color: #9cc0dc; }
.t-row { height: 30px; display: flex; align-items: center; padding: 0 16px 0 12px; gap: 8px; }
.t-row em { flex: 1; }
.t-out { margin-right: -1px; }
.exec-r { margin-right: -3px; }
.r-exec { margin-top: 4px; }
.r-start { margin-top: 1px; }
.r-complex { margin-top: 5px; }
.r-actors { margin-top: 3px; gap: 7px; }
.r-self { margin-top: 11px; }
.arr { width: 12px; height: 12px; flex: none; }
.check { width: 16px; height: 16px; background: #111; border: 1px solid #2a2a2a; border-radius: 2px; margin-left: -3px; }
.check.on { background: #101010; }
.check svg { width: 14px; height: 14px; display: block; }
.t-param { display: flex; padding: 7px 0 0 12px; gap: 8px; height: 54px; }
.p-debug { padding-top: 8px; height: 49px; margin-top: 0; }
.t-param > .pin { margin-top: 17px; }
.p-debug > .pin { margin-top: 15px; }
.t-param-b { display: flex; flex-direction: column; line-height: 14px; }
.combo { width: 191px; height: 27px; margin-left: 5px; margin-top: 1px; background: #111; border-radius: 4px; display: flex; align-items: center; justify-content: space-between; padding: 0 14px 0 10px; color: #9e9e9e; border: 1px solid #222; }
.more { position: absolute; left: 177px; bottom: 14px; color: #bbb; }
.mini-node { position: absolute; left: 0; top: 575px; width: 33px; height: 60px; background: #303030; border-radius: 0 8px 0 0; padding: 12px 0 0 7px; box-shadow: 1px 0 3px #111; }
.mini-plus { position: absolute; left: 10px; top: 624px; width: 15px; height: 15px; color: #bbb; }
.bp-mark { position: absolute; left: 977px; top: 547px; font-size: 60px; font-weight: 700; color: rgba(255,255,255,.16); letter-spacing: -2.500px; white-space: nowrap; }
.cursor-glow { position: absolute; left: 912px; top: 60px; width: 68px; height: 68px; border-radius: 50%; background: rgba(232,232,60,.42); }
.cursor { position: absolute; left: 935px; top: 83px; width: 22px; height: 22px; }
.tooltip { position: absolute; left: 958px; top: 104px; width: 75px; height: 46px; background: #ececec; color: #111; font-size: 12px; line-height: 14px; padding: 9px 0 0 10px; box-shadow: 1px 1px 2px #000; }

/* bottom panel */
.bottom { flex: 1; display: flex; flex-direction: column; position: relative; background: #1c1c1c; }
.bottom-tabs { height: 30px; display: flex; background: #151515; font-size: 12.700px; }
.btab { display: flex; align-items: center; padding-left: 5px; color: #b5b5b5; height: 30px; }
.b-active { width: 158px; background: #1f1f1f; padding-left: 6px; border-radius: 3px 3px 0 0; }
.b-ic { width: 14px; height: 18px; color: #c8c8c8; margin-right: 6px; }
.b-x { margin-left: 14px; font-size: 15px; color: #ccc; }
.b-s { width: 16px; height: 16px; color: #c2c2c2; margin: 0 7px 0 2px; }
.logs { padding: 18px 0 0 18px; }
.logs li { font-family: "Liberation Mono", monospace; font-size: 11.670px; color: #bcbcbc; line-height: 15px; white-space: nowrap; padding-left: 20px; position: relative; }
.logs li::before { content: ""; position: absolute; left: 2px; top: 6px; width: 4px; height: 4px; border-radius: 50%; background: #ddd; }
.bottom-foot { position: absolute; left: 0; right: 0; bottom: 17px; height: 22px; display: flex; justify-content: flex-end; align-items: center; padding-right: 16px; }
.page-btn { position: absolute; left: 566px; width: 75px; height: 19px; background: #2b2b2b; border-radius: 2px; color: #666; font-size: 11px; display: flex; align-items: center; justify-content: center; gap: 4px; }
.page-btn .chev { color: #666; width: 8px; }
.clear-btn { width: 73px; height: 21px; background: #383838; border-radius: 2px; color: #d4d4d4; font-size: 12px; line-height: 21px; text-align: center; }

/* details */
.details { background: #232323; height: 902px; position: relative; }
.det { height: 25px; background: #1a1a1a; padding-left: 4px; gap: 8px; font-size: 13px; }
.det-pen { width: 16px; height: 17px; color: #bbb; }
.det-search { height: 40px; display: flex; align-items: center; padding: 0 0 3px 8px; position: relative; }
.sp-det { width: 271px; height: 20px; padding-left: 4px; }
.sp-det .s-ic { margin-right: 7px; }
.tbl { width: 15px; height: 15px; position: absolute; left: 294px; top: 13px; }
.gear-d { width: 15px; height: 15px; color: #bbb; position: absolute; left: 318px; top: 13px; }
.d-head { height: 25px; background: #2c2c2c; display: flex; align-items: center; padding-left: 5px; gap: 7px; font-size: 11px; font-weight: 700; color: #b9b9b9; padding-bottom: 1px; }
.d-head2 { height: 27px; padding-bottom: 0; }
.d-row { height: 27px; display: flex; align-items: center; padding-left: 21px; position: relative; border-bottom: 1px solid #1e1e1e; color: #a6a6a6; font-size: 11.400px; white-space: nowrap; }
.d-label { width: 121px; overflow: hidden; flex: none; }
.d-tri { position: absolute; left: 6px; top: 8px; }
.d-val { width: 124px; height: 20px; background: #0f0f0f; border-radius: 2px; padding-left: 7px; line-height: 20px; color: #a8a8a8; font-size: 12px; }
.d-combo { display: flex; align-items: center; gap: 7px; padding-left: 5px; height: 22px; }
.d-color { width: 120px; height: 20px; background: #fff; border-radius: 3px; }
.d-check { width: 16px; height: 17px; background: #141414; border-radius: 2px; }
.d-check.faint { background: #1b1b1b; }
.dim { color: #555; }
.undo { position: absolute; left: 303px; top: 8px; width: 14px; height: 12px; }

/* status */
.status { flex: none; height: 32px; margin-top: 3px; background: #242424; display: flex; align-items: center; color: #b5b5b5; position: relative; }
.st-item { display: flex; align-items: center; height: 32px; gap: 4px; white-space: nowrap; border-right: 1px solid #1a1a1a; }
.st-item svg { flex: none; width: 16px; height: 16px; }
.st-cd { width: 132px; padding-left: 11px; color: #bcbcbc; }
.st-cd svg { color: #b5b5b5; }
.st-ol { width: 105px; padding-left: 13px; font-size: 12.700px; }
.st-log { color: #c0c0c0; }
.st-cmd { width: 86px; padding-left: 13px; gap: 5px; }
.st-cmd .chev { width: 10px; height: 6px; margin-left: 4px; }
.console { width: 299px; height: 21px; background: #111; border: 1px solid #2a2a2a; border-radius: 2px; margin-left: 4px; padding-left: 7px; line-height: 18px; font-family: "Liberation Mono", monospace; font-size: 11.500px; color: #484848; }
.st-un { margin-left: auto; width: 107px; padding-left: 13px; border-left: 1px solid #1a1a1a; }
.st-rc { width: 163px; padding-left: 15px; gap: 6px; border-right: none; }
.st-rc .chev { width: 10px; height: 6px; margin-left: 0; }

/* taskbar */
.taskbar { flex: none; height: 40px; background: linear-gradient(90deg, #2e3346 0, #323648 16%, #3a3540 26%, #43343c 33%, #463438 44%, #3a3448 47%, #4b3b38 55%, #44353b 62%, #3b2e3d 68%, #332c3e 73%, #2a2a3c 88%, #25293c 100%); display: flex; position: relative; }
.task { width: 49px; height: 40px; display: flex; align-items: center; justify-content: center; position: relative; flex: none; color: #fff; left: -1px; }
.task svg { width: 24px; height: 24px; }
.task .t-search { width: 22px; height: 22px; color: #fff; }
.task .t-gear { width: 20px; height: 20px; }
.task .t-ue { color: #eee; }
.open::after { content: ""; position: absolute; left: 4px; right: 4px; bottom: 0; height: 2px; background: #93c4ee; }
.active { background: rgba(255,255,255,.14); }
.tray { position: absolute; left: 1480px; top: 0; right: 0; height: 40px; display: flex; align-items: center; color: #f4f4f4; }
.weather { width: 26px; height: 24px; flex: none; }
.temp { margin-left: 7px; width: 40px; font-size: 14.500px; }
.sky { font-size: 14.500px; width: 52px; font-family: "Noto Sans CJK SC", sans-serif; }
.caret { width: 14px; height: 8px; flex: none; margin-right: 9px; }
.tr { flex: none; }
.mic { width: 14px; height: 20px; margin-right: 11px; }
.net { width: 17px; height: 16px; margin-right: 6px; }
.vol { width: 17px; height: 16px; margin-right: 9px; }
.ime-zh { font-size: 14px; width: 25px; font-family: "Noto Sans CJK SC", sans-serif; }
.s-tray { width: 16px; height: 16px; background: #e84a1e; border-radius: 3px; font-weight: 900; font-size: 13px; line-height: 16px; text-align: center; color: #fff; margin-right: 16px; margin-left: 1px; }
.clock { width: 100px; display: flex; flex-direction: column; align-items: center; font-size: 13px; line-height: 19px; white-space: nowrap; font-family: "Noto Sans CJK SC", sans-serif; padding-top: 1px; }
.notif { width: 20px; height: 18px; margin-left: 22px; position: relative; margin-top: 1px; }
.notif svg { width: 16px; height: 16px; display: block; }
.notif span { position: absolute; left: 7px; top: 2px; width: 16px; height: 16px; border-radius: 50%; border: 1px solid #999; background: #333; font-size: 11px; line-height: 14px; text-align: center; font-weight: 700; }

/* overlays */
.ime { position: absolute; left: 1684px; top: 83px; width: 236px; height: 70px; }
.ime-under { position: absolute; left: 90px; top: 25px; width: 102px; height: 29px; background: #f5f5f5; border-radius: 0 0 14px 0; font-size: 12px; color: #666; z-index: 0; }
.ime-pct { position: absolute; left: -3px; top: 9px; font-size: 17px; color: #777; white-space: nowrap; }
.ime-cpu { position: absolute; left: 23px; top: 11px; white-space: nowrap; }
.ime-cpu b { display: inline; color: #2fb35f; }
.ime-ball { position: absolute; left: 78px; top: 6px; width: 16px; height: 16px; background: #4a8fe0; border-radius: 50%; }
.ime-green { position: absolute; left: 45px; top: 0; width: 62px; height: 66px; border-radius: 50%; border: 13px solid #3fc86c; background: #f5f5f5; z-index: 1; }
.ime-bar { position: absolute; left: 25px; top: 13px; width: 200px; height: 24px; background: #fff; display: flex; align-items: center; gap: 7px; padding-left: 11px; z-index: 2; }
.ime-bar svg { width: 17px; height: 17px; flex: none; }
.ime-s { position: absolute; left: -25px; top: -5px; width: 29px; height: 29px; background: #f0531c; color: #fff; font-weight: 900; font-size: 25px; line-height: 29px; text-align: center; border-radius: 3px; transform: rotate(-10deg); }
.ime-cn { color: #1677d2; font-weight: 700; font-size: 15px; width: 17px; font-family: "Noto Sans CJK SC", sans-serif; }
.ime-p { color: #1677d2; font-weight: 700; font-size: 14px; width: 17px; text-align: center; }
.winmark { position: absolute; left: 1632px; top: 943px; display: flex; flex-direction: column; color: #5c5c5c; font-family: "Noto Sans", "Noto Sans CJK SC", sans-serif; white-space: nowrap; }
.w1 { font-size: 20.500px; line-height: 28px; }
.w2 { font-size: 15px; line-height: 18px; }
.tafe { position: absolute; left: 10px; top: 1030px; height: 38px; display: flex; gap: 9px; color: rgba(255,255,255,.2); font-family: "Liberation Sans", sans-serif; font-weight: 700; font-size: 38px; line-height: 38px; }
.tafe-logo { width: 40px; height: 38px; background: rgba(255,255,255,.2); border-radius: 8px; }
```
